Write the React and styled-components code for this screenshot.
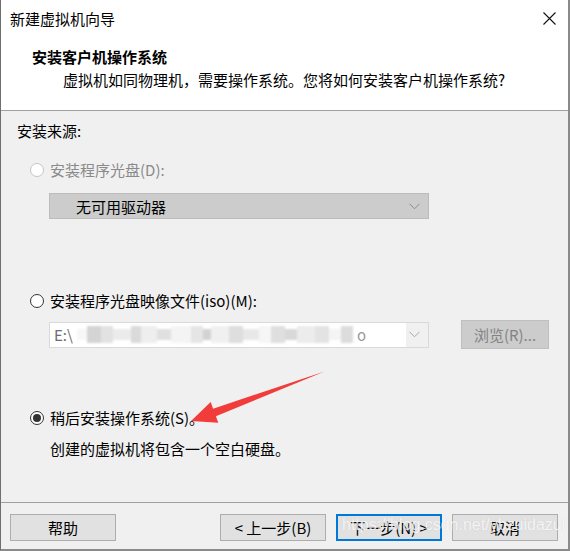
import styled, { createGlobalStyle } from "styled-components";

const GlobalStyle = createGlobalStyle`
  html, body {
    margin: 0;
    padding: 0;
    background: #ffffff;
  }
  * {
    box-sizing: border-box;
  }
`;

// shades of the pixelated (censored) part of the iso path
const mosaic = [
  ["#f7f7f7", 10], ["#d4d4d4", 14], ["#e2e2e2", 12], ["#ebebeb", 18], ["#dadada", 10],
  ["#eeeeee", 16], ["#e0e0e0", 14], ["#f4f4f4", 20], ["#e5e5e5", 12], ["#d2d2d2", 8],
  ["#f0f0f0", 18], ["#dedede", 14], ["#e8e8e8", 16], ["#f6f6f6", 12], ["#dfdfdf", 14],
  ["#d8d8d8", 12], ["#ececec", 18], ["#e3e3e3", 14], ["#f4f4f4", 12], ["#dcdcdc", 12],
];

const Window = styled.div`
  position: relative;
  width: 570px;
  height: 551px;
  display: flex;
  flex-direction: column;
  background: #ffffff;
  border-left: 1px solid #6f6f6f;
  border-right: 2px solid #8a8a8a;
  border-bottom: 2px solid #8a8a8a;
  font-family: "Noto Sans CJK SC", "Noto Sans", sans-serif;
  font-size: 15px;
  color: #000000;
  overflow: hidden;
`;

const TitleBar = styled.div`
  height: 37px;
  display: flex;
  align-items: center;
  justify-content: space-between;
  padding: 0 12px 0 9px;
  flex-shrink: 0;
`;

const TitleText = styled.span`
  font-size: 15px;
  line-height: 20px;
`;

const Header = styled.div`
  height: 73px;
  padding-top: 10px;
  flex-shrink: 0;
`;

const HeaderTitle = styled.div`
  padding-left: 31px;
  font-weight: 700;
  line-height: 20px;
  height: 20px;
`;

const HeaderSub = styled.div`
  padding-left: 62px;
  margin-top: 3px;
  line-height: 20px;
`;

const Divider = styled.div`
  height: 1px;
  background: #a0a0a0;
  flex-shrink: 0;
`;

const Content = styled.div`
  flex: 1;
  background: #f0f0f0;
  padding: 10px 0 0 16px;
  display: flex;
  flex-direction: column;
`;

const Label = styled.div`
  line-height: 20px;
  height: 20px;
  margin-top: ${(p) => p.$top || 0}px;
  padding-left: ${(p) => p.$indent || 0}px;
  color: ${(p) => (p.$disabled ? "#8a8a8a" : "#000000")};
`;

const RadioRow = styled.label`
  display: flex;
  align-items: center;
  gap: 6px;
  height: 20px;
  margin-top: ${(p) => p.$top}px;
  padding-left: 13px;
  color: ${(p) => (p.$disabled ? "#8a8a8a" : "#000000")};
  line-height: 20px;
`;

const RadioCircle = styled.span`
  width: 14px;
  height: 14px;
  border-radius: 50%;
  border: 1px solid ${(p) => (p.$disabled ? "#c4c4c4" : "#333333")};
  background: #ffffff;
  display: flex;
  align-items: center;
  justify-content: center;
  flex-shrink: 0;

  &::after {
    content: "";
    display: ${(p) => (p.$checked ? "block" : "none")};
    width: 8px;
    height: 8px;
    border-radius: 50%;
    background: #333333;
  }
`;

const SourceRow = styled.div`
  display: flex;
  align-items: center;
  gap: 32px;
  margin-top: ${(p) => p.$top}px;
  padding-left: 32px;
  height: ${(p) => p.$height || 26}px;
`;

const Combo = styled.div`
  width: 380px;
  height: 26px;
  display: flex;
  align-items: center;
  justify-content: space-between;
  padding: 0 8px 0 ${(p) => p.$pad}px;
  background: ${(p) => (p.$dim ? "#cccccc" : "#f0f0f0")};
  border: 1px solid ${(p) => (p.$dim ? "#bcbcbc" : "#d9d9d9")};
  color: ${(p) => (p.$dim ? "#000000" : "#6d6d6d")};
  overflow: hidden;
  white-space: nowrap;
`;

const ComboValue = styled.span`
  display: flex;
  align-items: center;
  height: 24px;
  margin-left: -${(p) => p.$pad || 0}px;
  padding-left: ${(p) => p.$pad || 0}px;
  width: 356px;
  background: #ffffff;
`;

const Mosaic = styled.span`
  display: flex;
  align-items: center;
  height: 18px;
  margin-left: 4px;
  filter: blur(1px);
`;

const Tile = styled.span`
  display: block;
  height: ${(p) => p.$h}px;
`;

const Tail = styled.span`
  color: #9a9a9a;
  margin-left: 4px;
`;

const BrowseButton = styled.button`
  width: 88px;
  height: 29px;
  background: #cccccc;
  border: 1px solid #bfbfbf;
  color: #838383;
  font: inherit;
  padding: 0;
`;

const Footer = styled.div`
  height: 46px;
  background: #f0f0f0;
  display: flex;
  align-items: flex-start;
  padding: 11px 10px 0 9px;
  flex-shrink: 0;
`;

const Spacer = styled.div`
  flex: 1;
`;

const Button = styled.button`
  width: 106px;
  height: 27px;
  margin-left: ${(p) => p.$gap || 0}px;
  background: #e1e1e1;
  border: ${(p) => (p.$focused ? "2px solid #0078d7" : "1px solid #adadad")};
  font: inherit;
  font-size: 15px;
  color: #000000;
  padding: 0;
  line-height: 1;
`;

const Arrow = styled.svg`
  position: absolute;
  left: 0;
  top: 0;
  pointer-events: none;
`;

const Watermark = styled.div`
  position: absolute;
  left: 341px;
  top: 516px;
  font-family: "Liberation Sans", Arial, sans-serif;
  font-size: 16px;
  color: rgba(255, 255, 255, 0.78);
  text-shadow: 0 0 1px rgba(160, 160, 160, 0.35);
  pointer-events: none;
  white-space: nowrap;
`;

function Chevron({ color }) {
  return (
    <svg width="11" height="7" viewBox="0 0 11 7">
      <path d="M0.5 0.8 L5.5 5.8 L10.5 0.8" fill="none" stroke={color} strokeWidth="1" />
    </svg>
  );
}

export default function App() {
  return (
    <>
      <GlobalStyle />
      <Window>
        <TitleBar>
          <TitleText>新建虚拟机向导</TitleText>
          <svg width="13" height="13" viewBox="0 0 13 13">
            <path d="M0.5 0.5 L12.5 12.5 M12.5 0.5 L0.5 12.5" stroke="#111" strokeWidth="1.1" />
          </svg>
        </TitleBar>

        <Header>
          <HeaderTitle>安装客户机操作系统</HeaderTitle>
          <HeaderSub>虚拟机如同物理机，需要操作系统。您将如何安装客户机操作系统?</HeaderSub>
        </Header>

        <Divider />

        <Content>
          <Label>安装来源:</Label>

          <RadioRow $top={19} $disabled>
            <RadioCircle $disabled />
            <span>安装程序光盘(D):</span>
          </RadioRow>

          <SourceRow $top={13}>
            <Combo $dim $pad={26}>
              <span>无可用驱动器</span>
              <Chevron color="#8c8c8c" />
            </Combo>
          </SourceRow>

          <RadioRow $top={72}>
            <RadioCircle />
            <span>安装程序光盘映像文件(iso)(M):</span>
          </RadioRow>

          <SourceRow $top={9} $height={29}>
            <Combo $pad={4}>
              <ComboValue $pad={4}>
                E:\
                <Mosaic>
                  {mosaic.map(([c, w], i) => (
                    <Tile key={i} $h={i % 3 === 0 ? 11 : 17} style={{ background: c, width: w }} />
                  ))}
                </Mosaic>
                <Tail>o</Tail>
              </ComboValue>
              <Chevron color="#a8a8a8" />
            </Combo>
            <BrowseButton>浏览(R)...</BrowseButton>
          </SourceRow>

          <RadioRow $top={59}>
            <RadioCircle $checked />
            <span>稍后安装操作系统(S)。</span>
          </RadioRow>

          <Label $top={11} $indent={33}>
            创建的虚拟机将包含一个空白硬盘。
          </Label>
        </Content>

        <Divider />

        <Footer>
          <Button>帮助</Button>
          <Spacer />
          <Button>&lt; 上一步(B)</Button>
          <Button $gap={10} $focused>
            下一步(N) &gt;
          </Button>
          <Button $gap={10}>取消</Button>
        </Footer>

        <Arrow width="570" height="551" viewBox="0 0 570 551">
          <polygon
            points="190,421 209.7,402 212.1,408.7 323.5,371.5 214.9,416.2 217.3,422.8"
            fill="#f23b3b"
          />
        </Arrow>

        <Watermark>https://blog.csdn.net/ybzuidazui</Watermark>
      </Window>
    </>
  );
}
